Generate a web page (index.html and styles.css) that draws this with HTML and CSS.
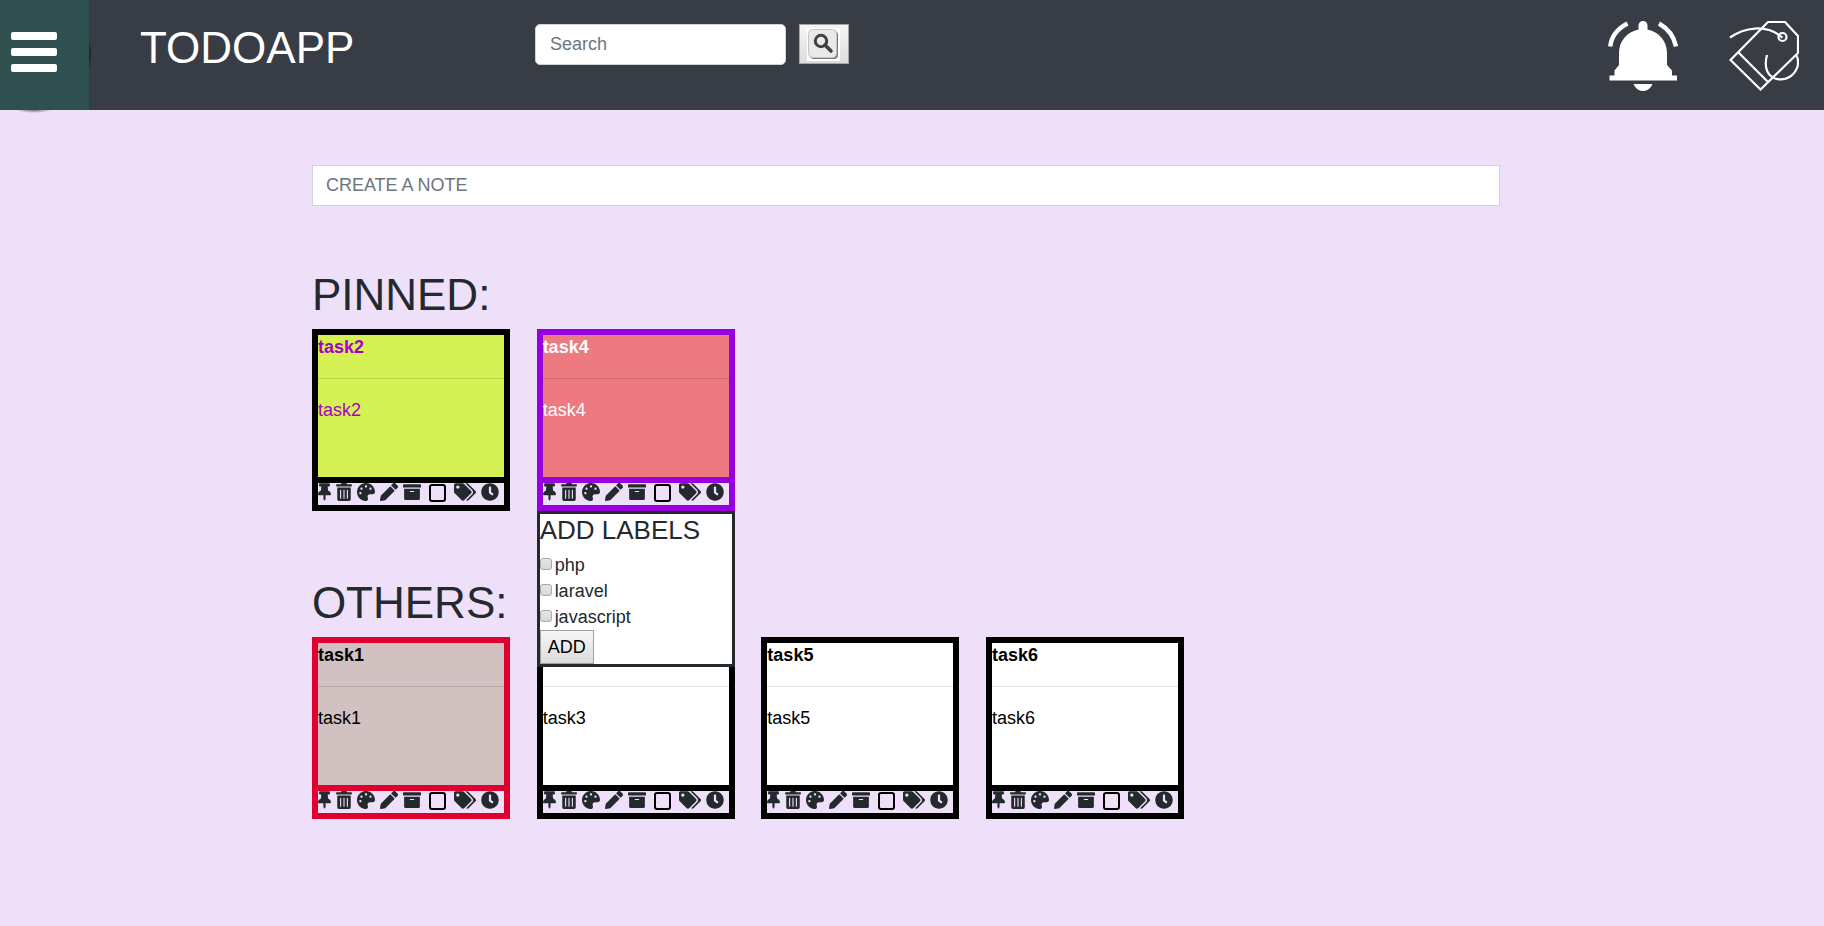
FILE: index.html
```html
<!DOCTYPE html>
<html lang="en">
<head>
<meta charset="utf-8">
<title>TODOAPP</title>
<link rel="stylesheet" href="styles.css">
</head>
<body>
<svg class="sprite" aria-hidden="true">
  <symbol id="pin" viewBox="0 0 384 512"><path d="M298.028 214.267L285.793 96H328c13.255 0 24-10.745 24-24V24c0-13.255-10.745-24-24-24H56C42.745 0 32 10.745 32 24v48c0 13.255 10.745 24 24 24h42.207L85.972 214.267C37.465 236.82 0 277.261 0 328c0 13.255 10.745 24 24 24h136v104.007c0 1.242.289 2.467.845 3.578l24 48c2.941 5.882 11.364 5.893 14.311 0l24-48a8.008 8.008 0 0 0 .845-3.578V352h136c13.255 0 24-10.745 24-24-.001-51.183-37.983-91.42-85.973-113.733z"/></symbol>
  <symbol id="trash" viewBox="0 0 448 512"><path d="M32 464a48 48 0 0 0 48 48h288a48 48 0 0 0 48-48V128H32zm272-256a16 16 0 0 1 32 0v224a16 16 0 0 1-32 0zm-96 0a16 16 0 0 1 32 0v224a16 16 0 0 1-32 0zm-96 0a16 16 0 0 1 32 0v224a16 16 0 0 1-32 0zM432 32H312l-9.4-18.7A24 24 0 0 0 281.1 0H166.8a23.72 23.72 0 0 0-21.4 13.3L136 32H16A16 16 0 0 0 0 48v32a16 16 0 0 0 16 16h416a16 16 0 0 0 16-16V48a16 16 0 0 0-16-16z"/></symbol>
  <symbol id="palette" viewBox="0 0 512 512"><path d="M204.3 5C104.9 24.4 24.8 104.3 5.2 203.4c-37 187 131.7 326.4 258.8 306.7 41.2-6.4 61.4-54.6 42.5-91.7-23.1-45.4 9.9-98.4 60.9-98.4h79.7c35.8 0 64.8-29.6 64.9-65.3C511.5 97.1 368.1-26.9 204.3 5zM96 320c-17.7 0-32-14.3-32-32s14.3-32 32-32 32 14.3 32 32-14.3 32-32 32zm32-128c-17.7 0-32-14.3-32-32s14.3-32 32-32 32 14.3 32 32-14.3 32-32 32zm128-64c-17.7 0-32-14.3-32-32s14.3-32 32-32 32 14.3 32 32-14.3 32-32 32zm128 64c-17.7 0-32-14.3-32-32s14.3-32 32-32 32 14.3 32 32-14.3 32-32 32z"/></symbol>
  <symbol id="pencil" viewBox="0 0 512 512"><path d="M497.9 142.1l-46.1 46.1c-4.7 4.7-12.3 4.7-17 0l-111-111c-4.7-4.7-4.7-12.3 0-17l46.1-46.1c18.7-18.7 49.1-18.7 67.9 0l60.1 60.1c18.8 18.7 18.8 49.1 0 67.9zM284.2 99.8L21.6 362.4.4 483.9c-2.9 16.4 11.4 30.6 27.8 27.8l121.5-21.3 262.6-262.6c4.7-4.7 4.7-12.3 0-17l-111-111c-4.8-4.7-12.4-4.7-17.1 0z"/></symbol>
  <symbol id="archive" viewBox="0 0 512 512"><path d="M32 448c0 17.7 14.3 32 32 32h384c17.7 0 32-14.3 32-32V160H32v288zm160-212c0-6.6 5.4-12 12-12h104c6.6 0 12 5.4 12 12v8c0 6.6-5.4 12-12 12H204c-6.6 0-12-5.4-12-12v-8zM480 32H32C14.3 32 0 46.3 0 64v48c0 8.8 7.2 16 16 16h480c8.8 0 16-7.2 16-16V64c0-17.7-14.3-32-32-32z"/></symbol>
  <symbol id="tags" viewBox="0 0 640 512"><path d="M497.941 225.941L286.059 14.059A48 48 0 0 0 252.118 0H48C21.49 0 0 21.49 0 48v204.118a48 48 0 0 0 14.059 33.941l211.882 211.882c18.744 18.745 49.136 18.746 67.882 0l204.118-204.118c18.745-18.745 18.745-49.137 0-67.882zM112 160c-26.51 0-48-21.49-48-48s21.49-48 48-48 48 21.49 48 48-21.49 48-48 48zm513.941 133.823L421.823 497.941c-18.745 18.745-49.137 18.745-67.882 0l-.36-.36L527.64 323.522c16.999-16.999 26.36-39.6 26.36-63.64s-9.362-46.641-26.36-63.64L331.397 0h48.721a48 48 0 0 1 33.941 14.059l211.882 211.882c18.745 18.745 18.745 49.137 0 67.882z"/></symbol>
  <symbol id="clock" viewBox="0 0 512 512"><path d="M256,8C119,8,8,119,8,256S119,504,256,504,504,393,504,256,393,8,256,8Zm92.49,313h0l-20,25a16,16,0,0,1-22.49,2.5h0l-67-49.72a40,40,0,0,1-15-31.23V112a16,16,0,0,1,16-16h32a16,16,0,0,1,16,16V256l58,42.5A16,16,0,0,1,348.49,321Z"/></symbol>
</svg>

<header class="topbar">
  <button class="menu-toggle" type="button" aria-label="Menu">
    <span class="bar"></span><span class="bar"></span><span class="bar"></span>
  </button>
  <h1 class="heading brand">TODOAPP</h1>
  <form class="search" role="search">
    <input class="field search-field" type="search" placeholder="Search" aria-label="Search">
    <button class="search-button" type="button" aria-label="Search notes">
      <svg width="33" height="33" viewBox="0 0 33 33">
        <rect width="33" height="33" fill="#fff"/>
        <rect x="3" y="3" width="28" height="28" rx="4" fill="#77777b"/>
        <rect x="1.5" y="1.5" width="28" height="28" rx="4" fill="#e9e9ec" stroke="#c4c4c8"/>
        <circle cx="14" cy="13" r="5.7" fill="none" stroke="#443f41" stroke-width="3"/>
        <path d="M18 17l6 6" stroke="#443f41" stroke-width="3.6" stroke-linecap="round"/>
      </svg>
    </button>
  </form>
  <nav class="actions">
    <button class="icon-button" type="button" aria-label="Reminders">
      <svg width="70" height="70" viewBox="0 0 70 70" fill="#fff">
        <path d="M30.500 8.500V4.500a4.500 4.500 0 0 1 9 0V8.500C51 11 59 20 59 32V44L64 49.500V54.500H69V59.500H1.500V54.500H6.500V49.500L11 44V32C11 20 19 11 30.500 8.500z"/>
        <path d="M25.500 63H44.500C42.500 67.500 39 70 35 70s-7.500-2.500-9.500-7z"/>
        <path d="M19.500 2.500Q4 10.500 2.200 25.500M51 2.500Q65 10.500 68 25.500" fill="none" stroke="#fff" stroke-width="4.400"/>
      </svg>
    </button>
    <button class="icon-button" type="button" aria-label="Labels">
      <svg width="70" height="70" viewBox="0 0 70 70" fill="none" stroke="#fff" stroke-width="2.200">
        <path d="M1.500 39L39 1H56L69 15V32L31.500 68.500zM9.500 31.500L38.500 60.500"/>
        <path d="M1 16.500C16 6 36 4 50 14M38 34C34.500 47 39 55 46 57.500 57 61 66 54 68.500 45.500 69.500 41 69 36 66.500 33.500"/>
        <circle cx="53.500" cy="16" r="4"/><path d="M49.500 14l4 2.500"/>
      </svg>
    </button>
  </nav>
</header>

<main class="content">
  <input class="field note-field" type="text" placeholder="CREATE A NOTE" aria-label="Create a note">

  <section class="group pinned">
    <h2 class="heading">PINNED:</h2>
    <div class="cards">
      <article class="card card-lime">
        <div class="note"><h3 class="note-title">task2</h3><hr class="rule"><p class="note-text">task2</p></div>
        <div class="tools">
          <button class="tool" type="button" aria-label="Pin"><svg class="glyph glyph-pin"><use href="#pin"/></svg></button>
          <button class="tool" type="button" aria-label="Delete"><svg class="glyph glyph-trash"><use href="#trash"/></svg></button>
          <button class="tool" type="button" aria-label="Colour"><svg class="glyph"><use href="#palette"/></svg></button>
          <button class="tool" type="button" aria-label="Edit"><svg class="glyph"><use href="#pencil"/></svg></button>
          <button class="tool" type="button" aria-label="Archive"><svg class="glyph"><use href="#archive"/></svg></button>
          <input class="done" type="checkbox" aria-label="Done">
          <button class="tool" type="button" aria-label="Labels"><svg class="glyph glyph-tags"><use href="#tags"/></svg></button>
          <button class="tool" type="button" aria-label="Remind me"><svg class="glyph"><use href="#clock"/></svg></button>
        </div>
      </article>
      <article class="card card-coral">
        <div class="note"><h3 class="note-title">task4</h3><hr class="rule"><p class="note-text">task4</p></div>
        <div class="tools">
          <button class="tool" type="button" aria-label="Pin"><svg class="glyph glyph-pin"><use href="#pin"/></svg></button>
          <button class="tool" type="button" aria-label="Delete"><svg class="glyph glyph-trash"><use href="#trash"/></svg></button>
          <button class="tool" type="button" aria-label="Colour"><svg class="glyph"><use href="#palette"/></svg></button>
          <button class="tool" type="button" aria-label="Edit"><svg class="glyph"><use href="#pencil"/></svg></button>
          <button class="tool" type="button" aria-label="Archive"><svg class="glyph"><use href="#archive"/></svg></button>
          <input class="done" type="checkbox" aria-label="Done">
          <button class="tool" type="button" aria-label="Labels"><svg class="glyph glyph-tags"><use href="#tags"/></svg></button>
          <button class="tool" type="button" aria-label="Remind me"><svg class="glyph"><use href="#clock"/></svg></button>
        </div>
        <form class="labels">
          <h4 class="labels-title">ADD LABELS</h4>
          <label class="option"><input class="tick" type="checkbox">php</label>
          <label class="option"><input class="tick" type="checkbox">laravel</label>
          <label class="option"><input class="tick" type="checkbox">javascript</label>
          <button class="add" type="button">ADD</button>
        </form>
      </article>
    </div>
  </section>

  <section class="group others">
    <h2 class="heading">OTHERS:</h2>
    <div class="cards">
      <article class="card card-rose">
        <div class="note"><h3 class="note-title">task1</h3><hr class="rule"><p class="note-text">task1</p></div>
        <div class="tools">
          <button class="tool" type="button" aria-label="Pin"><svg class="glyph glyph-pin"><use href="#pin"/></svg></button>
          <button class="tool" type="button" aria-label="Delete"><svg class="glyph glyph-trash"><use href="#trash"/></svg></button>
          <button class="tool" type="button" aria-label="Colour"><svg class="glyph"><use href="#palette"/></svg></button>
          <button class="tool" type="button" aria-label="Edit"><svg class="glyph"><use href="#pencil"/></svg></button>
          <button class="tool" type="button" aria-label="Archive"><svg class="glyph"><use href="#archive"/></svg></button>
          <input class="done" type="checkbox" aria-label="Done">
          <button class="tool" type="button" aria-label="Labels"><svg class="glyph glyph-tags"><use href="#tags"/></svg></button>
          <button class="tool" type="button" aria-label="Remind me"><svg class="glyph"><use href="#clock"/></svg></button>
        </div>
      </article>
      <article class="card">
        <div class="note"><h3 class="note-title">task3</h3><hr class="rule"><p class="note-text">task3</p></div>
        <div class="tools">
          <button class="tool" type="button" aria-label="Pin"><svg class="glyph glyph-pin"><use href="#pin"/></svg></button>
          <button class="tool" type="button" aria-label="Delete"><svg class="glyph glyph-trash"><use href="#trash"/></svg></button>
          <button class="tool" type="button" aria-label="Colour"><svg class="glyph"><use href="#palette"/></svg></button>
          <button class="tool" type="button" aria-label="Edit"><svg class="glyph"><use href="#pencil"/></svg></button>
          <button class="tool" type="button" aria-label="Archive"><svg class="glyph"><use href="#archive"/></svg></button>
          <input class="done" type="checkbox" aria-label="Done">
          <button class="tool" type="button" aria-label="Labels"><svg class="glyph glyph-tags"><use href="#tags"/></svg></button>
          <button class="tool" type="button" aria-label="Remind me"><svg class="glyph"><use href="#clock"/></svg></button>
        </div>
      </article>
      <article class="card">
        <div class="note"><h3 class="note-title">task5</h3><hr class="rule"><p class="note-text">task5</p></div>
        <div class="tools">
          <button class="tool" type="button" aria-label="Pin"><svg class="glyph glyph-pin"><use href="#pin"/></svg></button>
          <button class="tool" type="button" aria-label="Delete"><svg class="glyph glyph-trash"><use href="#trash"/></svg></button>
          <button class="tool" type="button" aria-label="Colour"><svg class="glyph"><use href="#palette"/></svg></button>
          <button class="tool" type="button" aria-label="Edit"><svg class="glyph"><use href="#pencil"/></svg></button>
          <button class="tool" type="button" aria-label="Archive"><svg class="glyph"><use href="#archive"/></svg></button>
          <input class="done" type="checkbox" aria-label="Done">
          <button class="tool" type="button" aria-label="Labels"><svg class="glyph glyph-tags"><use href="#tags"/></svg></button>
          <button class="tool" type="button" aria-label="Remind me"><svg class="glyph"><use href="#clock"/></svg></button>
        </div>
      </article>
      <article class="card">
        <div class="note"><h3 class="note-title">task6</h3><hr class="rule"><p class="note-text">task6</p></div>
        <div class="tools">
          <button class="tool" type="button" aria-label="Pin"><svg class="glyph glyph-pin"><use href="#pin"/></svg></button>
          <button class="tool" type="button" aria-label="Delete"><svg class="glyph glyph-trash"><use href="#trash"/></svg></button>
          <button class="tool" type="button" aria-label="Colour"><svg class="glyph"><use href="#palette"/></svg></button>
          <button class="tool" type="button" aria-label="Edit"><svg class="glyph"><use href="#pencil"/></svg></button>
          <button class="tool" type="button" aria-label="Archive"><svg class="glyph"><use href="#archive"/></svg></button>
          <input class="done" type="checkbox" aria-label="Done">
          <button class="tool" type="button" aria-label="Labels"><svg class="glyph glyph-tags"><use href="#tags"/></svg></button>
          <button class="tool" type="button" aria-label="Remind me"><svg class="glyph"><use href="#clock"/></svg></button>
        </div>
      </article>
    </div>
  </section>
</main>
</body>
</html>
```
FILE: styles.css
```css
* {
  box-sizing: border-box;
}

body {
  margin: 0;
  min-height: 100vh;
  background: #eee0f9;
  color: #24292d;
  font-family: "Liberation Sans", Arial, sans-serif;
  font-size: 18px;
  line-height: 24px;
}

button,
input {
  margin: 0;
  font: inherit;
}

svg {
  display: block;
}

.sprite {
  position: absolute;
  width: 0;
  height: 0;
}

.heading {
  justify-self: start;
  margin: 0;
  font-size: 44px;
  font-weight: 400;
  line-height: 53px;
}

/* Top bar */

.topbar {
  display: grid;
  grid-template-columns: 89px 446px auto 1fr;
  align-items: start;
  background: #383c44;
}

.menu-toggle {
  position: relative;
  display: flex;
  flex-direction: column;
  align-self: stretch;
  gap: 8px;
  padding: 32px 32px 38px 11px;
  border: 0;
  background: #2f504f;
}

.menu-toggle::before,
.menu-toggle::after {
  position: absolute;
  content: "";
}

.menu-toggle::before {
  top: 100%;
  left: 16px;
  width: 36px;
  height: 3px;
  background: radial-gradient(ellipse at top, #77707c, transparent 70%);
}

.menu-toggle::after {
  top: 38px;
  left: 100%;
  width: 3px;
  height: 34px;
  background: radial-gradient(ellipse at left, #1b1d21, transparent 70%);
}

.bar {
  width: 46px;
  height: 8px;
  border-radius: 2px;
  background: #fff;
}

.brand {
  padding: 21px 0 36px 51px;
  color: #fff;
}

.search {
  display: flex;
  align-items: flex-start;
  gap: 13px;
  padding-top: 24px;
}

.field {
  height: 41px;
  padding: 0 13px;
  border: 1px solid #ced4da;
  background: #fff;
  color: #495057;
}

.field::placeholder {
  color: #6c757d;
  opacity: 1;
}

.search-field {
  width: 251px;
  padding: 0 14px;
  border-radius: 5px;
  appearance: none;
}

.search-button {
  display: flex;
  align-items: center;
  width: 50px;
  height: 40px;
  padding: 0 7px;
  border: 1px solid #a6a6a6;
  background: linear-gradient(#f6f6f6, #dcdcdc);
}

.actions {
  display: flex;
  justify-content: flex-end;
  gap: 51px;
  padding: 21px 25px 0 0;
}

.icon-button,
.tool {
  padding: 0;
  border: 0;
  background: none;
  color: inherit;
}

/* Notes */

.content {
  padding: 55px 17.75% 40px 17.1%;
}

.note-field {
  display: block;
  width: 100%;
}

.group {
  display: grid;
  gap: 8px;
}

.pinned {
  margin-top: 62px;
}

.others {
  margin-top: 65px;
}

.cards {
  display: flex;
  flex-wrap: wrap;
  gap: 27px 2.25%;
}

.card {
  --edge: #000;
  --fill: #fff;
  --ink: #000;
  position: relative;
  width: 198px;
  border: 6px solid var(--edge);
}

.card-lime {
  --fill: #d5f153;
  --ink: #a800c8;
}

.card-coral {
  --edge: #9700dd;
  --fill: #ec7a80;
  --ink: #fff;
}

.card-rose {
  --edge: #df0030;
  --fill: #d1c1c1;
}

.note {
  min-height: 148px;
  border-bottom: 6px solid var(--edge);
  background: var(--fill);
  color: var(--ink);
}

.note-title {
  margin: 0;
  font-size: 18px;
  font-weight: 700;
}

.rule {
  margin: 19px 0;
  border: 0;
  border-top: 1px solid rgba(0, 0, 0, 0.12);
}

.note-text {
  margin: 0;
}

.tools {
  display: flex;
  gap: 5px;
  height: 22px;
}

.glyph {
  width: 18px;
  height: 18px;
  fill: currentColor;
}

.tool {
  height: 18px;
}

.glyph-pin {
  width: 13px;
}

.glyph-trash {
  width: 16px;
}

.glyph-tags {
  width: 22px;
}

.done {
  width: 17px;
  height: 18px;
  margin: 1px 3px 0;
  border: 2px solid #000;
  border-radius: 3px;
  appearance: none;
}

/* Label menu hanging below its card */

.labels {
  position: absolute;
  z-index: 1;
  top: calc(100% + 6px);
  left: -6px;
  width: 198px;
  border: 3px solid #24292d;
  background: #fff;
}

.labels-title {
  margin: 0 0 6px;
  font-size: 26px;
  font-weight: 400;
  line-height: 32px;
}

.option {
  display: flex;
  align-items: center;
  gap: 3px;
  height: 26px;
}

.tick {
  width: 12px;
  height: 12px;
  margin-bottom: 3px;
  border: 1px solid #a9a9a9;
  border-radius: 3px;
  background: linear-gradient(#e6e6e6, #d8d8d8);
  appearance: none;
}

.add {
  display: block;
  height: 34px;
  padding: 0 7px;
  border: 1px solid #a0a0a0;
  background: linear-gradient(#f6f6f6, #dcdcdc);
  color: #000;
}
```
